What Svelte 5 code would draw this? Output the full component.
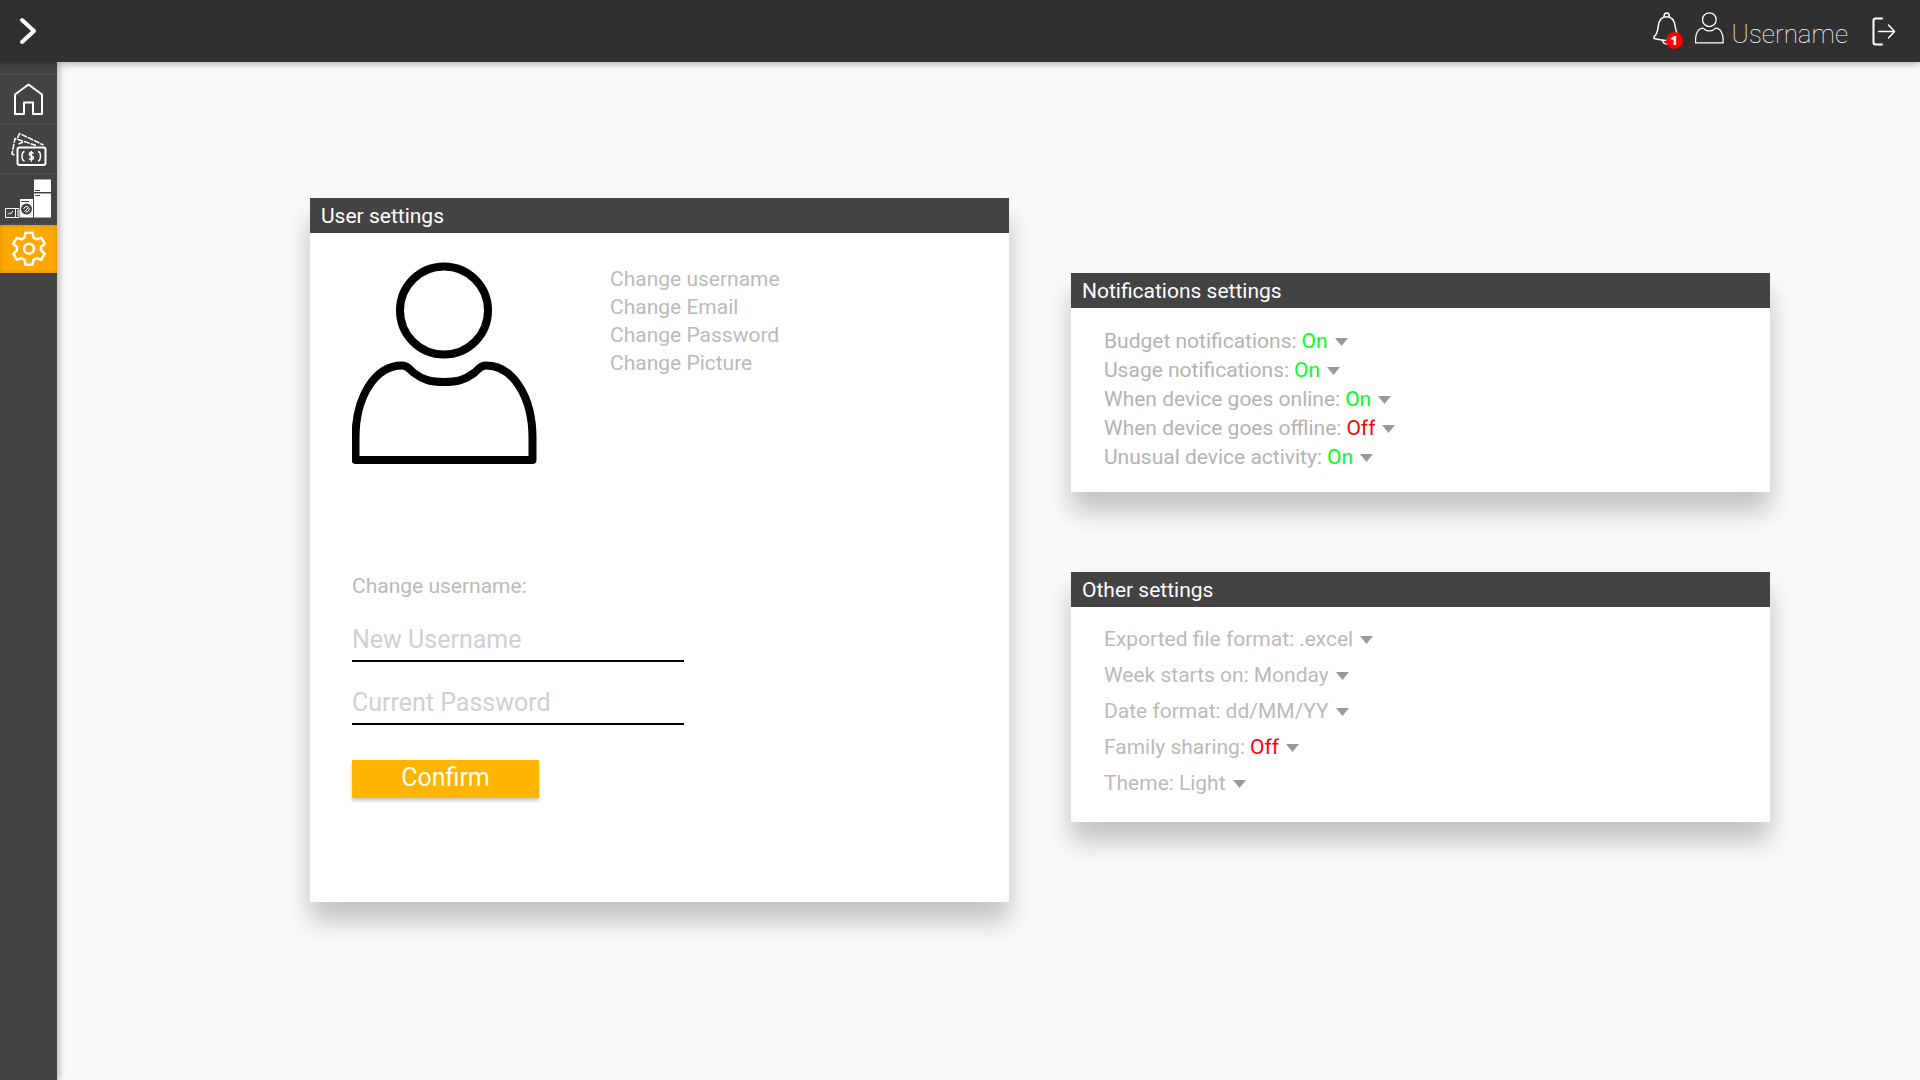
<script>
  let username = $state('');
  let password = $state('');

  const accountLinks = ['Change username', 'Change Email', 'Change Password', 'Change Picture'];

  let notifications = $state([
    { id: 'budget', label: 'Budget notifications:', value: 'On', options: ['On', 'Off'] },
    { id: 'usage', label: 'Usage notifications:', value: 'On', options: ['On', 'Off'] },
    { id: 'online', label: 'When device goes online:', value: 'On', options: ['On', 'Off'] },
    { id: 'offline', label: 'When device goes offline:', value: 'Off', options: ['On', 'Off'] },
    { id: 'unusual', label: 'Unusual device activity:', value: 'On', options: ['On', 'Off'] }
  ]);

  let others = $state([
    { id: 'export', label: 'Exported file format:', value: '.excel', options: ['.excel', '.csv', '.pdf'] },
    { id: 'week', label: 'Week starts on:', value: 'Monday', options: ['Monday', 'Sunday'] },
    { id: 'date', label: 'Date format:', value: 'dd/MM/YY', options: ['dd/MM/YY', 'MM/dd/YY'] },
    { id: 'family', label: 'Family sharing:', value: 'Off', options: ['On', 'Off'] },
    { id: 'theme', label: 'Theme:', value: 'Light', options: ['Light', 'Dark'] }
  ]);
</script>

{#snippet person(cls)}
  <svg class={cls} viewBox="1 0 186 204" fill="none" stroke="currentColor" stroke-width="8" stroke-linejoin="round" aria-hidden="true">
    <circle cx="93" cy="48.500" r="44" />
    <path d="M4.5 198V176C4.5 135 24 103.500 51 103.500C57 103.500 58 107 63 111C72 118 80 120 93 120C106 120 114 118 123 111C128 107 129 103.500 135 103.500C162 103.500 181.500 135 181.500 176V198Z" />
  </svg>
{/snippet}

{#snippet settingRow(item)}
  <li class="row">
    <label for={item.id}>{item.label}</label>
    <span class="pick">
      <select id={item.id} class:on={item.value === 'On'} class:off={item.value === 'Off'} bind:value={item.value}>
        {#each item.options as option}
          <option>{option}</option>
        {/each}
      </select>
      <svg class="arrow" viewBox="0 0 13 8" aria-hidden="true"><path d="M0 0H13L6.500 8Z" /></svg>
    </span>
  </li>
{/snippet}

<div class="app">
  <header class="topbar">
    <button class="icon-button" aria-label="Expand menu">
      <svg class="chevron" viewBox="0 0 18 28" aria-hidden="true"><path d="M3 3L15 14L3 25" /></svg>
    </button>
    <div class="account">
      <button class="icon-button bell" aria-label="Notifications">
        <svg viewBox="0 0 28 34" aria-hidden="true">
          <path d="M11 4.500C11 2.300 12 1 13.700 1S16.400 2.300 16.400 4.500" />
          <path d="M1 26.500V24.500C4.500 22 4.500 19 5.200 14.500C5.800 8.500 8.500 4.800 13.700 4.800S21.500 8.500 22.200 14.500C22.900 19 23.500 22 26.500 24.500V27.500L11 28.500Z" />
          <path d="M9.500 28C10 31 11.500 32 13.700 32S17.400 31 18 28" />
        </svg>
        <span class="badge">1</span>
      </button>
      <a class="profile" href="#profile">
        {@render person('person-small')}
        <span>Username</span>
      </a>
      <button class="icon-button" aria-label="Log out">
        <svg class="logout" viewBox="0 0 24 29" aria-hidden="true">
          <path d="M10 1.500H3.500Q1.500 1.500 1.500 3.500V25.500Q1.500 27.500 3.500 27.500H10" />
          <path class="fine" d="M6.500 14.500H22M16.500 8L22.500 14.500L16.500 21" />
        </svg>
      </button>
    </div>
  </header>

  <div class="body">
    <nav class="sidebar" aria-label="Main">
      <a href="#home" aria-label="Home">
        <svg viewBox="0 0 57 48" aria-hidden="true">
          <path d="M15 39V19.500L28.500 9.500L42 19.500V39H33V27.500H24V39Z" />
        </svg>
      </a>
      <a href="#budget" aria-label="Budget">
        <svg viewBox="0 0 57 48" aria-hidden="true">
          <rect x="17.500" y="22.500" width="28" height="17.500" rx="2" />
          <g class="light">
            <path d="M17.500 13L19.500 8.500L43.500 20" stroke-dasharray="6 1" />
            <path d="M14.500 30L12 29L15 13.500L36 20.500" stroke-dasharray="6 1" />
            <path d="M18.500 19L23 17M24.500 26.500Q22 27 22 31Q22 35.500 24.500 36M38 26.500Q40.500 27 40.500 31Q40.500 35.500 38 36" />
            <path d="M33.500 28.500Q31 26.500 29.500 28.500Q28.800 30.500 31.300 31Q34 31.800 33.200 33.800Q31.500 35.500 29 33.500M31.300 26V36.500" />
          </g>
        </svg>
      </a>
      <a href="#devices" aria-label="Devices">
        <svg viewBox="0 0 57 48" aria-hidden="true">
          <path class="solid" d="M34 4.500H51V17H34ZM34 18.500H51V42.500H34Z" />
          <path class="dark" d="M35 15.500H40M35 20.500H40" />
          <rect class="solid" x="20" y="24" width="13" height="18.500" />
          <path class="dark" d="M21 26.500H29" />
          <circle class="drum" cx="26.500" cy="34" r="5.500" />
          <path class="thin" d="M23.500 34Q24.500 31 27.500 31.500L29.500 34Q28.500 37.500 25.500 37M24.500 36.500L28.500 32.500" />
          <rect class="thin" x="5.500" y="33.500" width="13.500" height="9" />
          <path class="thin" d="M15.500 33.500V42M8 39.500L10 37.500M10 39.500L13 36M17 36H18.500M17 38H18.500M17 40H18.500" />
        </svg>
      </a>
      <a class="active" href="#settings" aria-label="Settings" aria-current="page">
        <svg viewBox="0 0 57 48" aria-hidden="true">
          <g class="gear">
            <circle cx="29" cy="23.700" r="5" />
            <path d="M25.500 7.700H32.500L33.500 12.600L36.500 14.300L41.200 12.700L44.700 18.700L41 22V25.400L44.700 28.700L41.200 34.700L36.500 33.100L33.500 34.800L32.500 39.700H25.500L24.500 34.800L21.500 33.100L16.800 34.700L13.300 28.700L17 25.400V22L13.300 18.700L16.800 12.700L21.500 14.300L24.500 12.600Z" />
          </g>
        </svg>
      </a>
    </nav>

    <main>
      <section class="card">
        <h2>User settings</h2>
        <div class="user">
          <div class="identity">
            {@render person('avatar')}
            <ul class="links">
              {#each accountLinks as link}
                <li><a href="#account">{link}</a></li>
              {/each}
            </ul>
          </div>
          <form onsubmit={(e) => e.preventDefault()}>
            <h3>Change username:</h3>
            <input type="text" placeholder="New Username" aria-label="New Username" bind:value={username} />
            <input type="password" placeholder="Current Password" aria-label="Current Password" bind:value={password} />
            <button class="confirm" type="submit">Confirm</button>
          </form>
        </div>
      </section>

      <div class="column">
        <section class="card">
          <h2>Notifications settings</h2>
          <ul class="rows compact">
            {#each notifications as item}
              {@render settingRow(item)}
            {/each}
          </ul>
        </section>
        <section class="card">
          <h2>Other settings</h2>
          <ul class="rows">
            {#each others as item}
              {@render settingRow(item)}
            {/each}
          </ul>
        </section>
      </div>
    </main>
  </div>
</div>

<style>
  :global(body) {
    margin: 0;
    background: #fafafa;
  }

  * {
    box-sizing: border-box;
  }

  .app {
    display: flex;
    flex-direction: column;
    min-height: 100vh;
    font-family: Roboto, 'Liberation Sans', sans-serif;
    font-size: 21px;
    color: #bababa;
  }

  ul,
  h2,
  h3 {
    margin: 0;
    padding: 0;
    list-style: none;
    font-weight: 400;
    font-size: inherit;
  }

  a {
    color: inherit;
    text-decoration: none;
  }

  button,
  input,
  select {
    font: inherit;
    border: 0;
    border-radius: 0;
    margin: 0;
    padding: 0;
    background: none;
    cursor: pointer;
  }

  svg {
    display: block;
    flex: none;
  }

  .topbar {
    position: relative;
    z-index: 2;
    display: flex;
    align-items: center;
    justify-content: space-between;
    height: 62px;
    padding: 0 24px 0 19px;
    background: #303030;
    color: #fff;
    box-shadow: 0 3px 6px rgba(0, 0, 0, 0.24);
  }

  .icon-button {
    color: #fff;
  }

  .icon-button svg {
    fill: none;
    stroke: currentColor;
    stroke-width: 2;
    stroke-linecap: round;
    stroke-linejoin: round;
  }

  .icon-button .chevron {
    width: 18px;
    height: 28px;
    stroke-width: 4;
  }

  .account {
    display: flex;
    align-items: center;
  }

  .bell {
    position: relative;
    margin: 0 14px 4px 0;
  }

  .icon-button.bell svg {
    width: 28px;
    height: 34px;
    stroke-width: 1.5;
  }

  .badge {
    position: absolute;
    right: -2px;
    bottom: -3px;
    width: 17px;
    height: 17px;
    border-radius: 50%;
    background: #f00;
    font-family: 'Open Sans', sans-serif;
    font-size: 12px;
    font-weight: 800;
    line-height: 17px;
    text-align: center;
  }

  .profile {
    display: flex;
    align-items: center;
    gap: 8px;
    margin-right: 24px;
    font-size: 26px;
    font-weight: 100;
    line-height: 32px;
  }

  .profile span {
    padding-top: 6px;
  }

  .logout {
    width: 24px;
    height: 29px;
  }

  .logout .fine {
    stroke-width: 1.5;
  }

  .body {
    display: flex;
    flex: 1;
  }

  .sidebar {
    flex: none;
    width: 57px;
    padding-top: 11px;
    background: #434343;
    box-shadow: 3px 0 6px rgba(0, 0, 0, 0.24);
  }

  .sidebar a {
    display: block;
    border-top: 2px solid #4a4a4a;
  }

  .sidebar .active {
    background: #ffa800;
    background-clip: padding-box;
    box-shadow: inset 0 0 4px rgba(0, 0, 0, 0.16);
    border-bottom: 2px solid #3a3a3a;
  }

  .sidebar svg {
    width: 57px;
    height: 48px;
    fill: none;
    stroke: #fff;
    stroke-width: 2;
    stroke-linejoin: round;
  }

  .sidebar .light {
    stroke-width: 1.5;
  }

  .sidebar .solid {
    fill: #fff;
    stroke: none;
  }

  .sidebar .dark {
    stroke: #434343;
    stroke-width: 1;
  }

  .sidebar .drum {
    fill: #434343;
    stroke: none;
  }

  .sidebar .thin {
    stroke-width: 1;
  }

  .sidebar .gear {
    stroke-width: 2.500;
  }

  main {
    flex: 1;
    display: grid;
    grid-template-columns: 1fr 1fr;
    align-items: start;
    gap: 62px;
    padding: 136px 150px 48px 253px;
  }

  .column {
    display: grid;
    gap: 80px;
    padding-top: 75px;
  }

  .card {
    background: #fff;
    box-shadow: 0 19px 26px rgba(0, 0, 0, 0.23);
  }

  .card h2 {
    padding: 1px 11px 0;
    background: #434343;
    color: #fff;
    line-height: 34px;
  }

  .user {
    padding: 29px 42px 104px;
  }

  .identity {
    display: flex;
    gap: 72px;
  }

  .avatar {
    width: 186px;
    height: 204px;
    color: #000;
  }

  .person-small {
    width: 29px;
    height: 32px;
    margin-bottom: 6px;
  }

  .links {
    padding-top: 3px;
    line-height: 28px;
  }

  form {
    display: flex;
    flex-direction: column;
    align-items: flex-start;
    margin-top: 106px;
  }

  h3 {
    line-height: 28px;
  }

  input {
    width: 332px;
    max-width: 100%;
    height: 43px;
    margin-top: 20px;
    border-bottom: 2px solid #000;
    font-size: 25px;
    color: #434343;
    cursor: text;
  }

  h3 + input {
    margin-top: 19px;
  }

  input::placeholder {
    color: #d0d0d0;
    opacity: 1;
  }

  .confirm {
    width: 187px;
    height: 38px;
    margin-top: 35px;
    padding-bottom: 3px;
    background: #ffb400;
    color: #fff;
    font-size: 25px;
    line-height: 28px;
    box-shadow: 0 3px 3px rgba(0, 0, 0, 0.2);
  }

  .rows {
    padding: 14px 33px 21px;
    line-height: 36px;
  }

  .rows.compact {
    padding-top: 19px;
    padding-bottom: 20px;
    line-height: 29px;
    color: #b3b3b3;
  }

  .row {
    display: flex;
    gap: 5px;
  }

  .pick {
    display: grid;
    align-items: center;
  }

  .pick > * {
    grid-area: 1 / 1;
  }

  select {
    appearance: none;
    field-sizing: content;
    padding-right: 20px;
    color: inherit;
    line-height: inherit;
  }

  select.on {
    color: #00ff1e;
  }

  select.off {
    color: #f00;
  }

  .arrow {
    justify-self: end;
    width: 13px;
    height: 8px;
    margin-top: 1px;
    fill: #999;
    pointer-events: none;
  }
</style>
